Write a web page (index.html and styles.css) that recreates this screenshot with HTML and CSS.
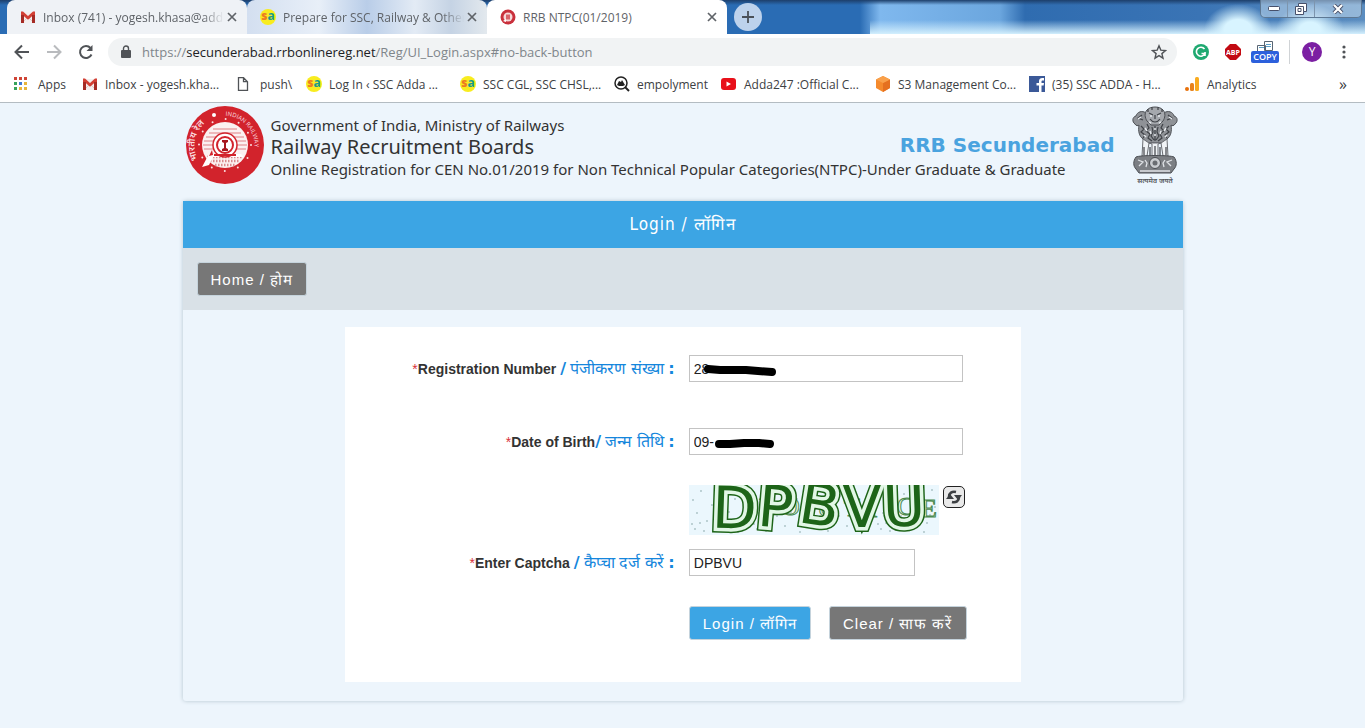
FILE: index.html
```html
<!DOCTYPE html>
<html lang="en">
<head>
  <meta charset="UTF-8" />
  <meta name="viewport" content="width=device-width, initial-scale=1.0" />
  <title>RRB NTPC(01/2019)</title>
  <link rel="stylesheet" href="styles.css">
</head>
<body>
  <!-- shared icons -->
  <svg class="defs" width="0" height="0" aria-hidden="true">
    <symbol id="gmail" viewBox="0 0 16 16">
      <path fill="#f3eeee" d="M1 3h14v11H1z"/>
      <path fill="none" stroke="#e3c9c7" d="M3 13l5-5 5 5"/>
      <path fill="#d23f34" d="M1 2.5h2L8 7l5-4.500h2V14h-3V7.200l-4 3.500-4-3.500V14H1z"/>
      <path fill="#a52b25" d="M1 6h3v8H1zM12 6h3v8h-3z"/>
    </symbol>
    <symbol id="cross" viewBox="0 0 10 10">
      <path d="M1 1l8 8M9 1l-8 8" stroke="#5f6368" stroke-width="1.700" fill="none"/>
    </symbol>
  </svg>

  <div class="browser">
    <div class="tabstrip">
      <div class="tab hover">
        <svg width="16" height="16"><use href="#gmail"/></svg>
        <span class="title">Inbox (741) - yogesh.khasa@add</span>
        <button aria-label="Close tab"><svg width="10" height="10"><use href="#cross"/></svg></button>
      </div>
      <div class="tab back">
        <span class="sa"><b>s</b>a</span>
        <span class="title">Prepare for SSC, Railway &amp; Other</span>
        <button aria-label="Close tab"><svg width="10" height="10"><use href="#cross"/></svg></button>
      </div>
      <div class="tab active">
        <svg width="16" height="16" viewBox="0 0 16 16">
          <circle cx="8" cy="8" r="7.500" fill="#c9303c"/>
          <circle cx="8" cy="8" r="4.500" fill="#f6d9da"/>
          <path d="M6 5.500h4v5H6z" fill="#d8636b"/>
          <path d="M3 12l3-2v3z" fill="#fff"/>
        </svg>
        <span class="title">RRB NTPC(01/2019)</span>
        <button aria-label="Close tab"><svg width="10" height="10"><use href="#cross"/></svg></button>
      </div>
      <button class="newtab" aria-label="New tab">
        <svg width="12" height="12" viewBox="0 0 12 12"><path d="M6 0v12M0 6h12" stroke="#4a5058" stroke-width="1.800"/></svg>
      </button>
      <div class="wincontrols">
        <button aria-label="Minimize"><svg width="12" height="6" viewBox="0 0 12 6"><rect x=".5" y=".5" width="11" height="4" rx="1" fill="#fff" stroke="#47506a"/></svg></button>
        <button aria-label="Restore"><svg width="12" height="12" viewBox="0 0 12 12"><path d="M3.500.5h8v8h-3v3h-8v-8h3z" fill="#fff" stroke="#47506a"/><path d="M3.500 3.500h5v5M3 5.500h3v3H3z" fill="none" stroke="#47506a"/></svg></button>
        <button aria-label="Close window"><svg width="12" height="10" viewBox="0 0 12 10"><path d="M2 1l8 8M10 1L2 9" stroke="#47506a" stroke-width="4"/><path d="M2 1l8 8M10 1L2 9" stroke="#fff" stroke-width="2.200"/></svg></button>
      </div>
    </div>

    <div class="toolbar">
      <button aria-label="Back"><svg width="16" height="16" viewBox="0 0 16 16"><path d="M15 8H2M8 1.500L1.500 8 8 14.500" fill="none" stroke="#505357" stroke-width="2"/></svg></button>
      <button aria-label="Forward"><svg width="16" height="16" viewBox="0 0 16 16"><path d="M1 8h13M8 1.500L14.500 8 8 14.500" fill="none" stroke="#b9bbbe" stroke-width="2"/></svg></button>
      <button aria-label="Reload"><svg width="16" height="16" viewBox="0 0 16 16"><path d="M13.500 10.500A6 6 0 1 1 12.500 4" fill="none" stroke="#505357" stroke-width="2"/><path d="M14.500 1v6h-6z" fill="#505357"/></svg></button>
      <div class="omnibox">
        <svg width="10" height="14" viewBox="0 0 10 14"><rect x="0" y="5" width="10" height="8" rx="1" fill="#505357"/><path d="M2.500 5.500V3.500a2.500 2.500 0 0 1 5 0v2" fill="none" stroke="#505357" stroke-width="1.400"/></svg>
        <span class="url">https://<b>secunderabad.rrbonlinereg.net</b>/Reg/UI_Login.aspx#no-back-button</span>
        <button aria-label="Bookmark this page"><svg width="16" height="16" viewBox="0 0 16 16"><path d="M8 1.800l1.800 4.300 4.700.4-3.600 3.100 1.100 4.600L8 11.700l-4 2.500 1.100-4.600L1.500 6.500l4.700-.4z" fill="none" stroke="#505357" stroke-width="1.400"/></svg></button>
      </div>
      <div class="extensions">
        <svg width="16" height="16" viewBox="0 0 16 16"><circle cx="8" cy="8" r="8" fill="#1fa971"/><path d="M11.500 5A4.500 4.500 0 1 0 12 9.500H8.500M12 8v4" fill="none" stroke="#fff" stroke-width="1.600"/></svg>
        <svg width="16" height="16" viewBox="0 0 16 16"><path d="M5 0h6l5 5v6l-5 5H5l-5-5V5z" fill="#c20a12"/><text x="8" y="11" text-anchor="middle" font-family="Open Sans, sans-serif" font-weight="bold" font-size="7" fill="#fff">ABP</text></svg>
        <svg class="copy" width="28" height="24" viewBox="0 0 28 24"><path d="M6.500 5.500h8v6h-8zM13.500 1.500h8v9h-8z" fill="#fff" stroke="#586573"/><path d="M8 7.500h5M15 4.500h5M15 6.500h5" stroke="#5aa0c8"/><rect y="11" width="28" height="12" rx="2" fill="#2c60dc"/><text x="14" y="20" text-anchor="middle" font-family="Open Sans, sans-serif" font-weight="600" font-size="9" fill="#fff">COPY</text></svg>
      </div>
      <span class="avatar">Y</span>
      <button aria-label="Menu"><svg width="4" height="14" viewBox="0 0 4 14"><circle cx="2" cy="2" r="1.600" fill="#505357"/><circle cx="2" cy="7" r="1.600" fill="#505357"/><circle cx="2" cy="12" r="1.600" fill="#505357"/></svg></button>
    </div>

    <nav class="bookmarks">
      <a class="apps" href="#"><svg width="14" height="14" viewBox="0 0 14 14"><path d="M0 0h3v3H0zM5 0h3v3H5zM10 0h3v3h-3z" fill="#cf4436"/><path d="M0 5h3v3H0zM0 10h3v3H0z" fill="#37a25b"/><path d="M5 5h3v3H5z" fill="#3f79d6"/><path d="M10 5h3v3h-3zM5 10h3v3H5zM10 10h3v3h-3z" fill="#e8b53a"/></svg><span>Apps</span></a>
      <a href="#"><svg width="16" height="16"><use href="#gmail"/></svg><span>Inbox - yogesh.kha...</span></a>
      <a class="apps" href="#"><svg width="14" height="14" viewBox="0 0 14 14"><path d="M2.500.7h5l4 4v8.600h-9zM7.500.7v4h4" fill="#fff" stroke="#505357" stroke-width="1.300"/></svg><span>push\</span></a>
      <a href="#"><span class="sa"><b>s</b>a</span><span>Log In ‹ SSC Adda ...</span></a>
      <a href="#"><span class="sa"><b>s</b>a</span><span>SSC CGL, SSC CHSL,...</span></a>
      <a href="#"><svg width="16" height="16" viewBox="0 0 16 16"><circle cx="7" cy="7" r="6" fill="none" stroke="#222" stroke-width="1.500"/><path d="M3 9l2-4 2 1 1-2 3 5-2 1H5z" fill="#222"/><path d="M11 11l4 4" stroke="#222" stroke-width="2"/></svg><span>empolyment</span></a>
      <a href="#"><svg width="16" height="16" viewBox="0 0 16 16"><rect y="2" width="15" height="12" rx="3" fill="#e8101a"/><path d="M5.500 5.500l4.500 2.500-4.500 2.500z" fill="#fff"/></svg><span>Adda247 :Official C...</span></a>
      <a href="#"><svg width="16" height="16" viewBox="0 0 16 16"><path d="M8 0l7 3.500v8.500L8 16l-7-4V3.500z" fill="#f58a2c"/><path d="M8 7l7-3.500V12l-7 4z" fill="#e5701f"/><path d="M8 0l7 3.500L8 7 1 3.500z" fill="#f9a04a"/></svg><span>S3 Management Co...</span></a>
      <a href="#"><svg width="16" height="16" viewBox="0 0 16 16"><path d="M0 0h16v16H0z" fill="#3b5998"/><path d="M10 16V9.500h-2.500V7H10V5c0-2 1.500-3 3.200-3H15v2.400h-1.200c-1 0-1.300.4-1.300 1.200V7H15l-.4 2.500h-2.100V16z" fill="#fff"/></svg><span>(35) SSC ADDA - H...</span></a>
      <a href="#"><svg width="16" height="16" viewBox="0 0 16 16"><circle cx="3" cy="13" r="2" fill="#e8710a"/><rect x="6" y="7" width="4" height="8" rx="1.500" fill="#e8831d"/><rect x="11" y="1" width="4" height="14" rx="1.500" fill="#f9ab20"/></svg><span>Analytics</span></a>
      <button aria-label="More bookmarks">»</button>
    </nav>
  </div>

  <header class="masthead">
    <svg class="rail-logo" width="78" height="78" viewBox="0 0 78 78" role="img" aria-label="Indian Railways">
      <defs><path id="ring" d="M14 57A30 30 0 1 1 65 54"/></defs>
      <circle cx="39" cy="39" r="39" fill="#d2232c"/>
      <g font-family="Open Sans, Noto Sans, sans-serif" fill="#fbdfe0">
        <text font-size="9" font-weight="600"><textPath href="#ring" startOffset="4">भारतीय रेल</textPath></text>
        <text font-size="6"><textPath href="#ring" startOffset="66">INDIAN RAILWAY</textPath></text>
      </g>
      <circle cx="28" cy="9" r="2" fill="#fff"/>
      <circle cx="39" cy="39" r="26" fill="none" stroke="#fbdfe0" stroke-width="2" stroke-dasharray="0 13.600" stroke-linecap="round"/>
      <circle cx="39" cy="39" r="23" fill="#fbf1f1"/>
      <path d="M23 27h32M20 31h38M18 35h42M17 39h44M18 43h42M27 23h24" stroke="#df8085" stroke-width="1"/>
      <path d="M21 51h36M24 55h30M29 59h20" stroke="#d98a8e" stroke-width="2.500" stroke-dasharray="1.500 1.500"/>
      <path d="M16 61l7-13h32l3 3H27l-4 8z" fill="#fff"/>
      <path d="M23 50l3-6 1 5z" fill="#d2232c"/>
      <circle cx="39" cy="39" r="12" fill="#fff" stroke="#d2232c" stroke-width="1.500"/>
      <circle cx="39" cy="39" r="8" fill="#fff" stroke="#d2232c" stroke-width="2"/>
      <path d="M36 34h6v2l-2 1v5l2 1v2h-6v-2l2-1v-5l-2-1z" fill="#a61820"/>
      <path d="M28 49h22" stroke="#d2232c" stroke-width="2"/>
    </svg>
    <div class="titles">
      <p>Government of India, Ministry of Railways</p>
      <h1>Railway Recruitment Boards</h1>
      <p>Online Registration for CEN No.01/2019 for Non Technical Popular Categories(NTPC)-Under Graduate &amp; Graduate</p>
    </div>
    <strong class="board">RRB Secunderabad</strong>
    <svg class="emblem" width="46" height="78" viewBox="0 0 46 78" role="img" aria-label="State Emblem of India">
      <!-- lions -->
      <g fill="#8f9297" stroke="#4c4f54" stroke-width="1">
        <path d="M14 7c-4-3-9-1-10 3-4 1-4 6-1 8 1 2 3 2 4 1-1 6 0 11 4 14l5 4h14l5-4c4-3 5-8 4-14 1 1 3 1 4-1 3-2 3-7-1-8-1-4-6-6-10-3z"/>
        <path d="M11 33l-1 17h5l2-13 3 1v12h6V38l3-1 2 13h5l-1-17-6 4H17z" fill="#f0f3f6" stroke="#6a6d72"/>
        <path d="M15 4c3-4 13-4 16 0 3 3 2 8 0 11l-4 4h-8l-4-4c-2-3-3-8 0-11z" fill="#a5a8ad"/>
      </g>
      <g fill="none" stroke="#3f4247" stroke-width="1.200">
        <path d="M17 7l4 2M29 7l-4 2M23 9v4M18 13c3 4 7 4 10 0M16 3v3M20 1v3M26 1v3M30 3v3"/>
        <path d="M10 9l-4 3 5 2M36 9l4 3-5 2M9 20l3 3-3 3 4 3-2 3M37 20l-3 3 3 3-4 3 2 3"/>
        <path d="M15 18l2 4-3 3 4 3-2 4 4 3M31 18l-2 4 3 3-4 3 2 4-4 3M23 20v15M20 21l1 5-2 4 3 4M26 21l-1 5 2 4-3 4"/>
        <path d="M12 41v8M18 41v8M23 40v9M28 41v8M34 41v8"/>
      </g>
      <path d="M6 13l3-2M37 11l3 2M18 10h2M26 10h2M13 22l2 3M32 25l2-3M18 25l1 3M28 28l1-3M12 29l2 2M33 31l2-2M22 23h2M22 29h2M17 16l2 1M27 17l2-1" fill="none" stroke="#e6e9ed" stroke-width="1.500"/>
      <!-- abacus with the wheel -->
      <path d="M4 51c4-2 34-2 38 0 3 4 3 9 0 12l-3 4H7l-3-4c-3-3-3-8 0-12z" fill="#7c7f84" stroke="#4c4f54"/>
      <circle cx="23" cy="57" r="5.500" fill="#c9ccd0" stroke="#4c4f54"/>
      <circle cx="23" cy="57" r="2.500" fill="#6a6d72"/>
      <path d="M6 54l5 2-4 4M40 54l-5 2 4 4M13 54l2 3-1 4M33 54l-2 3 1 4M8 65h30" fill="none" stroke="#dfe2e6" stroke-width="1.300"/>
      <text x="23" y="77" text-anchor="middle" font-family="Noto Sans, sans-serif" font-size="7" font-weight="600" fill="#55585d">सत्यमेव जयते</text>
    </svg>
  </header>

  <main class="panel">
    <h2>Login / लॉगिन</h2>
    <div class="subnav">
      <button class="btn grey" type="button">Home / होम</button>
    </div>

    <form class="login">
      <label for="regno"><i>*</i>Registration Number <em><b>/</b> पंजीकरण संख्या <b>:</b></em></label>
      <div class="field">
        <input id="regno" type="text" value="28">
        <svg class="ink regno" width="74" height="14" viewBox="0 0 74 14"><path d="M5 6l12 1h26l12 1 14 1" fill="none" stroke="#000" stroke-width="8" stroke-linecap="round" stroke-linejoin="round"/></svg>
      </div>

      <label class="tight" for="dob"><i>*</i>Date of Birth<em><b>/</b> जन्म तिथि <b>:</b></em></label>
      <div class="field tight">
        <input id="dob" type="text" value="09-">
        <svg class="ink dob" width="62" height="14" viewBox="0 0 62 14"><path d="M5 8h11l14-1h15l11 1" fill="none" stroke="#000" stroke-width="8" stroke-linecap="round" stroke-linejoin="round"/></svg>
      </div>

      <div class="captcha">
        <svg width="250" height="50" viewBox="0 0 250 50" role="img" aria-label="Captcha">
          <defs>
            <pattern id="dots" width="62" height="50" patternUnits="userSpaceOnUse">
              <path d="M4 15h0M8 28h0M3 39h0M12 6h0M18 36h0M23 20h0M15 46h0M29 9h0M34 41h0M40 27h0M46 14h0M52 38h0M57 5h0M60 22h0M26 31h0M49 47h0M6 44h0M37 3h0M55 30h0M11 38h0" stroke="#adc5c8" stroke-width="2" stroke-linecap="round"/>
            </pattern>
            <g id="letters">
              <text x="23" y="43" transform="rotate(2 40 25)">D</text>
              <text x="69" y="42" transform="rotate(5 85 25)">P</text>
              <text x="110" y="40" transform="rotate(9 130 25)">B</text>
              <text x="153" y="42">V</text>
              <text x="194" y="41" transform="rotate(-2 215 25)">U</text>
            </g>
          </defs>
          <rect width="250" height="50" fill="#ebf7fd"/>
          <rect width="250" height="50" fill="url(#dots)"/>
          <g class="ghost">
            <text x="70" y="31">P</text><text x="92" y="30">O</text><text x="128" y="31">U</text><text x="155" y="31">T</text><text x="180" y="32">I</text><text x="208" y="30">C</text><text x="232" y="32">E</text>
          </g>
          <use href="#letters" class="outer"/>
          <use href="#letters" class="middle"/>
          <use href="#letters" class="inner"/>
        </svg>
        <button class="refresh" type="button" aria-label="Refresh captcha">
          <svg width="18" height="18" viewBox="0 0 18 18"><path d="M4 9c0-4 3-6 7-5M14 9c0 4-3 6-7 5" fill="none" stroke="#3c3f42" stroke-width="2.600"/><path d="M9 7h8l-4 5zM1 11h8L5 6z" fill="#3c3f42"/></svg>
        </button>
      </div>

      <label class="tight" for="captcha"><i>*</i>Enter Captcha <em><b>/</b> कैप्चा दर्ज करें <b>:</b></em></label>
      <div class="field tight short">
        <input id="captcha" type="text" value="DPBVU">
      </div>

      <div class="actions">
        <button class="btn" type="button">Login / लॉगिन</button>
        <button class="btn grey" type="reset">Clear / साफ करें</button>
      </div>
    </form>
  </main>
</body>
</html>
```
FILE: styles.css
```css
* {
  box-sizing: border-box;
}
body {
  margin: 0;
  font-family: "Liberation Sans", Arial, sans-serif;
  background-color: #edf5fc;
  color: #333;
}
button {
  font-family: inherit;
  padding: 0;
  border: 0;
  background: none;
}
p, h1, h2 {
  margin: 0;
  font-weight: normal;
}
svg {
  display: block;
  flex: none;
}
.defs {
  position: absolute;
}

/* browser bars */
.browser {
  font-family: "Open Sans", "Noto Sans", sans-serif;
  font-size: 12px;
  background-color: #fff;
  border-bottom: 1px solid #b4bcc2;
}
.tabstrip {
  display: flex;
  height: 34px;
  padding-left: 7px;
  background:
    linear-gradient(#1d3f6b, transparent 5px),
    radial-gradient(ellipse 34px 26px at 1238px 30px, #d8f4ff 40%, transparent),
    radial-gradient(ellipse 34px 26px at 1310px 30px, #d8f4ff 30%, transparent),
    linear-gradient(transparent 20px, #d3effd 34px) 870px 0 no-repeat,
    linear-gradient(90deg, #2a6cb4 860px, #7fb8ee 880px, #6ba6de 1000px, #2f6cb0 1025px, #3a74b5 1200px, #5b8dc0);
}
.tab {
  display: flex;
  align-items: center;
  gap: 7px;
  width: 240px;
  padding: 0 10px 0 13px;
  border-radius: 8px 8px 0 0;
  color: #5f6368;
}
.title {
  flex: 1;
  margin-right: -4px;
  overflow: hidden;
  white-space: nowrap;
  -webkit-mask-image: linear-gradient(90deg, #000 88%, transparent);
}
.tab.hover {
  background-color: #eff2f6;
}
.tab.back {
  background: linear-gradient(90deg, #d3dff0, #e8eff8 30%, #b9cde8 50%, #e3ebf5 70%, #c5d3e4 85%, #e3e9ee);
}
.tab.active {
  background-color: #fff;
}
.active .title {
  -webkit-mask-image: none;
}
.sa {
  flex: none;
  width: 16px;
  height: 16px;
  border-radius: 50%;
  background-color: #f8ec1f;
  color: #189a8c;
  font-size: 12px;
  font-weight: bold;
  line-height: 14px;
  text-align: center;
}
.sa b {
  color: #ee7b22;
}
.newtab {
  display: flex;
  align-items: center;
  justify-content: center;
  width: 28px;
  height: 28px;
  margin: 3px 0 0 7px;
  border-radius: 50%;
  background-color: #bdd2ec;
}
.wincontrols {
  display: flex;
  height: 18px;
  margin: 0 3px 0 auto;
  border: 1px solid #5d7894;
  border-top: 0;
  border-radius: 0 0 5px 5px;
  background-color: rgba(205, 225, 242, 0.5);
}
.wincontrols button {
  display: flex;
  align-items: center;
  justify-content: center;
  width: 27px;
  border-right: 1px solid #7d95ae;
}
.wincontrols button:last-child {
  width: 46px;
  border-right: 0;
}
.toolbar {
  display: flex;
  align-items: center;
  gap: 16px;
  height: 36px;
  padding: 0 19px 0 14px;
}
.omnibox {
  display: flex;
  align-items: center;
  flex: 1;
  height: 28px;
  margin-left: -2px;
  padding: 0 10px 0 13px;
  border-radius: 14px;
  background-color: #f1f3f4;
  font-size: 13px;
}
.url {
  flex: 1;
  padding-left: 11px;
  color: #80868b;
}
.url b {
  font-weight: normal;
  color: #202124;
}
.extensions {
  display: flex;
  align-items: center;
  gap: 16px;
  padding-right: 10px;
  border-right: 1px solid #d0d3d6;
}
.copy {
  margin-left: -6px;
}
.avatar {
  width: 20px;
  margin: 0 4px 0 -4px;
  border-radius: 50%;
  background-color: #7b1fa2;
  color: #fff;
  text-align: center;
  line-height: 20px;
}
.bookmarks {
  display: grid;
  grid-template-columns: 68px 154px 70px 154px 154px 107px 154px 154px 155px 1fr 16px;
  align-items: center;
  height: 32px;
  padding: 0 14px 4px 14px;
}
.bookmarks a {
  display: flex;
  align-items: center;
  gap: 7px;
  color: #3c4043;
  text-decoration: none;
  white-space: nowrap;
}
.bookmarks .apps {
  gap: 10px;
}
.bookmarks button {
  font-size: 16px;
  color: #3c4043;
}

/* site header */
.masthead {
  display: flex;
  align-items: center;
  max-width: 1000px;
  margin: 0 auto;
  padding: 3px 5px 17px 3px;
}
.titles {
  flex: 1;
  width: 0;
  padding-top: 3px;
  margin-left: 7px;
  font-family: "Noto Sans", Tahoma, sans-serif;
  font-size: 15px;
  line-height: 22px;
  white-space: nowrap;
}
.titles h1 {
  font-size: 20px;
}
.board {
  font-family: "DejaVu Sans", Verdana, sans-serif;
  font-size: 20px;
  color: #4aa3df;
}
.emblem {
  margin-left: 17px;
}

/* login panel */
.panel {
  max-width: 1000px;
  margin: 0 auto 27px;
  padding-bottom: 19px;
  border-radius: 3px;
  box-shadow: 0 0 4px #b4c4ce;
}
.panel h2 {
  background-color: #3ca5e4;
  color: #fff;
  font-family: "DejaVu Sans Condensed", Tahoma, sans-serif;
  font-size: 17px;
  letter-spacing: 1px;
  line-height: 47px;
  text-align: center;
}
.subnav {
  padding: 14px;
  background-color: #d9e1e7;
}
.btn {
  height: 34px;
  padding: 0 13px;
  border: 1px solid #c5d3dc;
  border-radius: 3px;
  background-color: #3ca5e4;
  color: #fff;
  font-size: 15px;
  letter-spacing: 1px;
  white-space: nowrap;
}
.btn.grey {
  background-color: #777;
}
.login {
  display: grid;
  grid-template-columns: 1fr 1fr;
  column-gap: 14px;
  align-items: center;
  max-width: 676px;
  margin: 17px auto 0;
  padding: 28px 54px 42px;
  background-color: #fff;
}
.login label {
  margin-bottom: 46px;
  font-size: 14px;
  font-weight: bold;
  line-height: 20px;
  text-align: right;
  white-space: nowrap;
}
.login label i {
  color: #d9303a;
  font-style: normal;
  font-weight: normal;
}
.login label em {
  color: #1486dc;
  font-size: 16px;
  font-style: normal;
  font-weight: 500;
}
.login label b {
  font-family: "DejaVu Sans", Verdana, sans-serif;
}
.field {
  position: relative;
  margin: 0 4px 46px 0;
}
.login .tight {
  margin-bottom: 30px;
}
.short {
  margin-right: 52px;
}
.field input {
  display: block;
  width: 100%;
  height: 27px;
  padding: 0 4px;
  border: 1px solid #c3c3c3;
  background-color: #fff;
  color: #222;
  font-family: inherit;
  font-size: 14px;
}
.ink {
  position: absolute;
  top: 8px;
}
.ink.regno {
  left: 14px;
}
.ink.dob {
  left: 25px;
}
.captcha {
  display: flex;
  grid-column: 2;
  gap: 4px;
  margin-bottom: 14px;
}
.captcha #letters {
  font-family: "DejaVu Sans", sans-serif;
  font-size: 58px;
}
.outer {
  fill: #1d6418;
  stroke: #1d6418;
  stroke-width: 10px;
}
.middle {
  fill: #e2f7e6;
  stroke: #e2f7e6;
  stroke-width: 7px;
}
.inner {
  fill: #1d6418;
}
.ghost {
  font-family: "Liberation Serif", serif;
  font-size: 26px;
  fill: #e2f7e6;
  stroke: #4c8a50;
}
.refresh {
  display: flex;
  align-items: center;
  justify-content: center;
  width: 22px;
  height: 22px;
  margin-top: 1px;
  border: 1px solid #222;
  border-radius: 5px;
  background-color: #e9e9e9;
}
.actions {
  display: flex;
  grid-column: 2;
  gap: 18px;
}
```
